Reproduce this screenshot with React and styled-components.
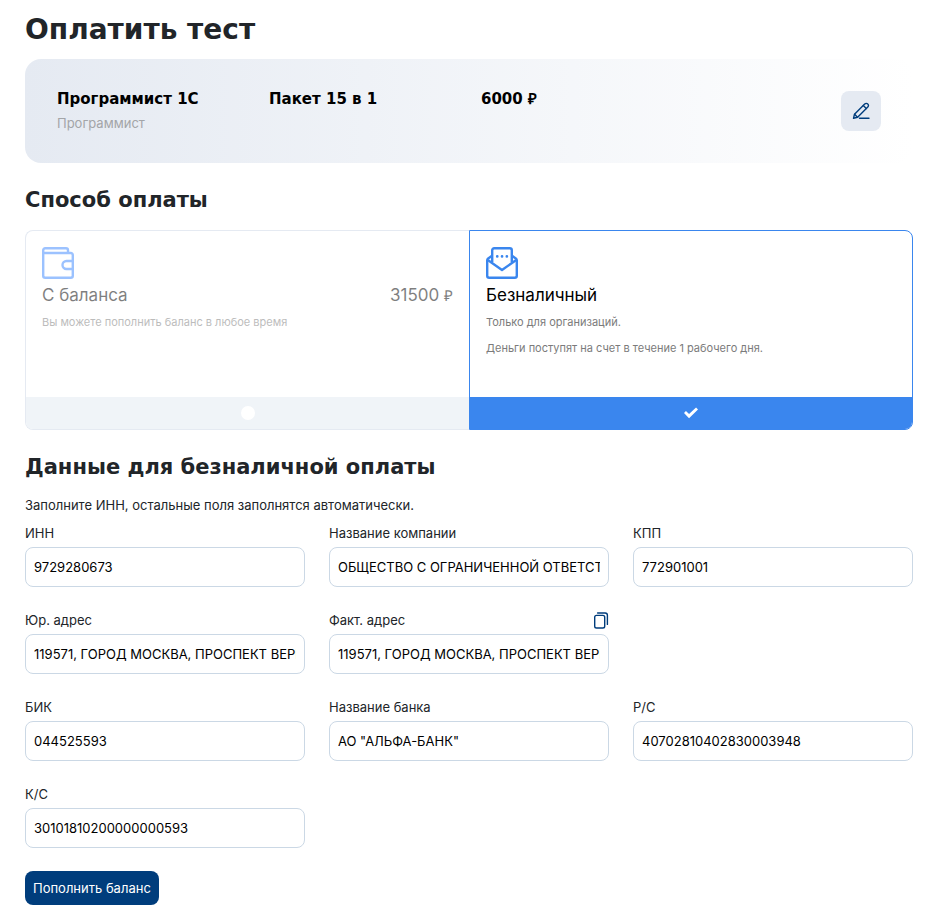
import React, { useState } from 'react';
import styled, { createGlobalStyle } from 'styled-components';

const GlobalStyle = createGlobalStyle`
  * {
    box-sizing: border-box;
  }

  body {
    margin: 0;
    background: #fff;
    color: #212529;
    font-family: Inter, "Liberation Sans", sans-serif;
    font-size: 13px;
    line-height: 20px;
  }

  h1, h2, p {
    margin: 0;
  }

  button, input {
    font-family: inherit;
  }
`;

const Page = styled.main`
  padding: 12px 22px 10px 25px;
`;

const PageTitle = styled.h1`
  font-family: "DejaVu Sans", Inter, sans-serif;
  font-size: 28px;
  line-height: 36px;
  font-weight: 700;
  margin-bottom: 11px;
`;

const SectionTitle = styled.h2`
  font-family: "DejaVu Sans", Inter, sans-serif;
  font-size: 21px;
  line-height: 28px;
  font-weight: 700;
  margin: 23px 0 ${({ $gap }) => $gap || 16}px;
`;

const OrderBox = styled.section`
  display: grid;
  grid-template-columns: repeat(4, 1fr);
  gap: 24px;
  padding: 32px;
  border-radius: 16px;
  background: linear-gradient(90deg, #e5eaf2 0%, #ffffff 100%);
`;

const OrderValue = styled.div`
  color: #000;
  font-family: "DejaVu Sans", Inter, sans-serif;
  font-size: 15px;
  line-height: 16px;
  font-weight: 700;
  white-space: nowrap;
`;

const OrderNote = styled.div`
  margin-top: 8px;
  color: #a3a5a8;
  font-size: 13px;
  line-height: 16px;
`;

const Ruble = styled.span`
  font-family: "Liberation Serif", serif;
  font-size: 15px;
  line-height: 1;
`;

const EditButton = styled.button`
  display: flex;
  align-items: center;
  justify-content: center;
  justify-self: end;
  width: 40px;
  height: 40px;
  padding: 0;
  border: none;
  border-radius: 8px;
  background: #e5eaf2;
  color: #003d7c;
  cursor: pointer;
`;

const Methods = styled.div`
  display: grid;
  grid-template-columns: 1fr 1fr;
`;

const MethodCard = styled.label`
  display: flex;
  flex-direction: column;
  min-height: 200px;
  overflow: hidden;
  border: 1px solid ${({ $active }) => ($active ? '#3a86ee' : '#e5eaf2')};
  cursor: pointer;

  &:first-child {
    border-radius: 8px 0 0 8px;
    border-right: none;
  }

  &:last-child {
    border-radius: 0 8px 8px 0;
  }
`;

const MethodBody = styled.div`
  flex: 1;
  padding: 16px;
  color: #000;
  opacity: ${({ $active }) => ($active ? 1 : 0.5)};

  svg {
    display: block;
    margin-bottom: 5px;
  }
`;

const MethodHead = styled.div`
  display: flex;
  justify-content: space-between;
  font-size: 17px;
  line-height: 22px;
`;

const MethodText = styled.p`
  margin-top: 6px;
  color: #7b7b7b;
  font-size: 11px;
  line-height: 20px;
`;

const MethodFooter = styled.div`
  display: flex;
  align-items: center;
  justify-content: center;
  height: 32px;
  background: ${({ $active }) => ($active ? '#3a86ee' : '#f0f4f8')};
`;

const MethodRadio = styled.input`
  appearance: none;
  width: 14px;
  height: 14px;
  margin: 0;
  border-radius: 50%;
  background: #fff;

  &:checked {
    border-radius: 0;
    clip-path: polygon(0 50%, 14% 36%, 36% 58%, 86% 11%, 100% 25%, 36% 87%);
  }
`;

const Fields = styled.div`
  display: grid;
  grid-template-columns: repeat(3, 1fr);
  gap: 23px 24px;
  margin: 8px 0 23px;
`;

const Field = styled.div`
  grid-column-start: ${({ $first }) => ($first ? 1 : 'auto')};
  min-width: 0;
`;

const FieldHead = styled.div`
  display: flex;
  align-items: center;
  justify-content: space-between;
  height: 20px;
  margin-bottom: 4px;
`;

const CopyButton = styled.button`
  display: flex;
  padding: 0;
  border: none;
  background: none;
  color: #003d7c;
  cursor: pointer;
`;

const TextInput = styled.input`
  display: block;
  width: 100%;
  height: 40px;
  padding: 0 8px;
  border: 1px solid #cbd8e5;
  border-radius: 8px;
  background: #fff;
  color: #000;
  font-size: 13px;
  outline: none;

  &:focus {
    border-color: #3a86ee;
  }
`;

const SubmitButton = styled.button`
  display: block;
  height: 34px;
  padding: 0 8px;
  border: none;
  border-radius: 8px;
  background: #003d7c;
  color: #fff;
  font-size: 13px;
  cursor: pointer;
`;

const PencilIcon = () => (
  <svg width="18" height="18" viewBox="0 0 18 18" fill="none" stroke="currentColor" strokeWidth="1.4" strokeLinejoin="round" strokeLinecap="round">
    <path d="M1.5 16.3L2.5 12.2L12.7 2C13.6 1.1 15 1.1 15.8 2C16.7 2.8 16.7 4.2 15.8 5.1L5.6 15.3Z" />
    <path d="M11.3 3.6L14.3 6.6M2.6 12.3L5.5 15.2M7.5 16.3H17" />
  </svg>
);

const CopyIcon = () => (
  <svg width="16" height="18" viewBox="0 0 16 18" fill="none" stroke="currentColor" strokeWidth="1.4" strokeLinejoin="round" strokeLinecap="round">
    <rect x="1.7" y="4.4" width="10" height="12.6" rx="1.8" />
    <path d="M4.6 2H12.2C13.4 2 14.4 3 14.4 4.2V13.4" />
  </svg>
);

const WalletIcon = () => (
  <svg width="32" height="32" viewBox="0 0 32 32" fill="none" stroke="#3a86ff" strokeWidth="2.4" strokeLinejoin="round">
    <path d="M1.2 6V28.8C1.2 29.9 2.1 30.8 3.2 30.8H28.8C29.9 30.8 30.8 29.9 30.8 28.8V8C30.8 6.9 29.9 6 28.8 6H1.2V3.2C1.2 2.1 2.1 1.2 3.2 1.2H24C25.1 1.2 26 2.1 26 3.2V6" />
    <path d="M31 14H24.5C22.3 14 20.5 15.8 20.5 18C20.5 20.2 22.3 22 24.5 22H31" />
  </svg>
);

const LetterIcon = () => (
  <svg width="32" height="32" viewBox="0 0 32 32" fill="none" stroke="#3a86ee" strokeWidth="2.4" strokeLinejoin="round">
    <path d="M6.2 15V3.2C6.2 2.1 7.1 1.2 8.2 1.2H23.8C24.9 1.2 25.8 2.1 25.8 3.2V15" />
    <path d="M6 8.8L2.2 11.4C1.6 11.9 1.2 12.4 1.2 13.2V28.8C1.2 29.9 2.1 30.8 3.2 30.8H28.8C29.9 30.8 30.8 29.9 30.8 28.8V13.2C30.8 12.4 30.4 11.9 29.8 11.4L26 8.8" />
    <path d="M1.8 13L16 23L30.2 13" />
    <path d="M11.2 9.4H11.3M16 9.4H16.1M20.8 9.4H20.9" strokeWidth="2.6" strokeLinecap="round" />
  </svg>
);

const methods = [
  {
    id: 'balance',
    title: 'С баланса',
    sum: '31500',
    icon: <WalletIcon />,
    texts: ['Вы можете пополнить баланс в любое время'],
  },
  {
    id: 'cashless',
    title: 'Безналичный',
    icon: <LetterIcon />,
    texts: ['Только для организаций.', 'Деньги поступят на счет в течение 1 рабочего дня.'],
  },
];

const fields = [
  { name: 'inn', label: 'ИНН', first: true },
  { name: 'company', label: 'Название компании' },
  { name: 'kpp', label: 'КПП' },
  { name: 'legalAddress', label: 'Юр. адрес', first: true },
  { name: 'actualAddress', label: 'Факт. адрес', copy: true },
  { name: 'bik', label: 'БИК', first: true },
  { name: 'bank', label: 'Название банка' },
  { name: 'account', label: 'Р/С' },
  { name: 'corrAccount', label: 'К/С', first: true },
];

const App = () => {
  const [method, setMethod] = useState('cashless');
  const [formData, setFormData] = useState({
    inn: '9729280673',
    company: 'ОБЩЕСТВО С ОГРАНИЧЕННОЙ ОТВЕТСТВЕННОСТЬЮ',
    kpp: '772901001',
    legalAddress: '119571, ГОРОД МОСКВА, ПРОСПЕКТ ВЕРНАДСКОГО',
    actualAddress: '119571, ГОРОД МОСКВА, ПРОСПЕКТ ВЕРНАДСКОГО',
    bik: '044525593',
    bank: 'АО "АЛЬФА-БАНК"',
    account: '40702810402830003948',
    corrAccount: '30101810200000000593',
  });

  const handleChange = (e) => {
    const { name, value } = e.target;
    setFormData((prev) => ({ ...prev, [name]: value }));
  };

  const copyAddress = () => {
    setFormData((prev) => ({ ...prev, actualAddress: prev.legalAddress }));
  };

  return (
    <Page>
      <GlobalStyle />
      <PageTitle>Оплатить тест</PageTitle>

      <OrderBox>
        <div>
          <OrderValue>Программист 1С</OrderValue>
          <OrderNote>Программист</OrderNote>
        </div>
        <OrderValue>Пакет 15 в 1</OrderValue>
        <OrderValue>6000 <Ruble>₽</Ruble></OrderValue>
        <EditButton type="button">
          <PencilIcon />
        </EditButton>
      </OrderBox>

      <SectionTitle>Способ оплаты</SectionTitle>
      <Methods>
        {methods.map((item) => {
          const active = method === item.id;
          return (
            <MethodCard key={item.id} $active={active}>
              <MethodBody $active={active}>
                {item.icon}
                <MethodHead>
                  <span>{item.title}</span>
                  {item.sum && <span>{item.sum} <Ruble>₽</Ruble></span>}
                </MethodHead>
                {item.texts.map((text) => (
                  <MethodText key={text}>{text}</MethodText>
                ))}
              </MethodBody>
              <MethodFooter $active={active}>
                <MethodRadio
                  type="radio"
                  name="method"
                  checked={active}
                  onChange={() => setMethod(item.id)}
                />
              </MethodFooter>
            </MethodCard>
          );
        })}
      </Methods>

      <SectionTitle $gap={14}>Данные для безналичной оплаты</SectionTitle>
      <form onSubmit={(e) => e.preventDefault()}>
        <p>Заполните ИНН, остальные поля заполнятся автоматически.</p>
        <Fields>
          {fields.map((field) => (
            <Field key={field.name} $first={field.first}>
              <FieldHead>
                <label htmlFor={field.name}>{field.label}</label>
                {field.copy && (
                  <CopyButton type="button" onClick={copyAddress}>
                    <CopyIcon />
                  </CopyButton>
                )}
              </FieldHead>
              <TextInput
                id={field.name}
                name={field.name}
                value={formData[field.name]}
                onChange={handleChange}
              />
            </Field>
          ))}
        </Fields>
        <SubmitButton type="submit">Пополнить баланс</SubmitButton>
      </form>
    </Page>
  );
};

export default App;
